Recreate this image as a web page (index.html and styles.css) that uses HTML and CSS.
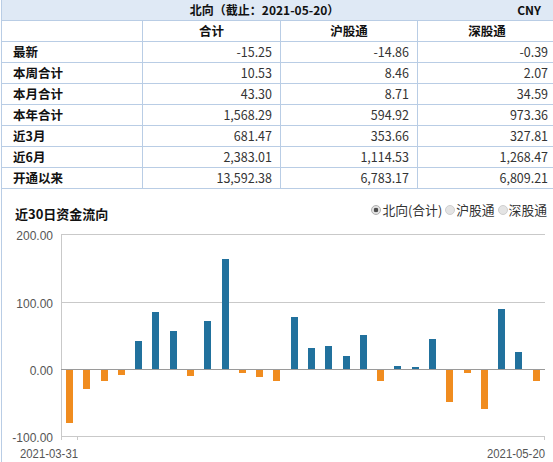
FILE: index.html
```html
<!DOCTYPE html>
<html lang="zh-CN">
<head>
  <meta charset="UTF-8">
  <meta name="viewport" content="width=device-width, initial-scale=1.0">
  <title>北向资金</title>
  <link rel="stylesheet" href="styles.css">
</head>
<body>
  <div class="panel">
    <table class="flow-table">
      <colgroup>
        <col class="c1"><col class="c2"><col class="c3"><col class="c4">
      </colgroup>
      <tr class="head">
        <td colspan="4">
          <div class="head-line">
            <span class="head-title">北向（截止：2021-05-20）</span>
            <span class="head-unit">CNY</span>
          </div>
        </td>
      </tr>
      <tr class="cols">
        <th></th><th>合计</th><th>沪股通</th><th>深股通</th>
      </tr>
      <tr><th>最新</th><td>-15.25</td><td>-14.86</td><td>-0.39</td></tr>
      <tr><th>本周合计</th><td>10.53</td><td>8.46</td><td>2.07</td></tr>
      <tr><th>本月合计</th><td>43.30</td><td>8.71</td><td>34.59</td></tr>
      <tr><th>本年合计</th><td>1,568.29</td><td>594.92</td><td>973.36</td></tr>
      <tr><th>近3月</th><td>681.47</td><td>353.66</td><td>327.81</td></tr>
      <tr><th>近6月</th><td>2,383.01</td><td>1,114.53</td><td>1,268.47</td></tr>
      <tr><th>开通以来</th><td>13,592.38</td><td>6,783.17</td><td>6,809.21</td></tr>
    </table>

    <div class="chart">
      <div class="chart-head">
        <span class="chart-title">近30日资金流向</span>
        <div class="radios">
          <label class="opt"><span class="radio on"></span>北向(合计)</label>
          <label class="opt"><span class="radio"></span>沪股通</label>
          <label class="opt"><span class="radio"></span>深股通</label>
        </div>
      </div>

      <svg class="plot" width="553" height="238" viewBox="2 0 553 238">
        <g class="grid">
          <line x1="61" y1="9.5" x2="545" y2="9.5"/>
          <line x1="61" y1="77.5" x2="545" y2="77.5"/>
          <line x1="61" y1="211.5" x2="545" y2="211.5"/>
          <line x1="61.5" y1="9" x2="61.5" y2="215"/>
          <line x1="77.5" y1="211" x2="77.5" y2="215"/>
          <line x1="544.5" y1="211" x2="544.5" y2="215"/>
        </g>
        <g class="bars">
          <rect class="down" x="66" y="145" width="7" height="53"/>
          <rect class="down" x="83" y="145" width="7" height="19"/>
          <rect class="down" x="101" y="145" width="7" height="11"/>
          <rect class="down" x="118" y="145" width="7" height="5"/>
          <rect class="up" x="135" y="116" width="7" height="28"/>
          <rect class="up" x="152" y="87" width="7" height="57"/>
          <rect class="up" x="170" y="106" width="7" height="38"/>
          <rect class="down" x="187" y="145" width="7" height="6"/>
          <rect class="up" x="204" y="96" width="7" height="48"/>
          <rect class="up" x="222" y="34" width="7" height="110"/>
          <rect class="down" x="239" y="145" width="7" height="3"/>
          <rect class="down" x="256" y="145" width="7" height="7"/>
          <rect class="down" x="273" y="145" width="7" height="11"/>
          <rect class="up" x="291" y="92" width="7" height="52"/>
          <rect class="up" x="308" y="123" width="7" height="21"/>
          <rect class="up" x="325" y="121" width="7" height="23"/>
          <rect class="up" x="343" y="131" width="7" height="13"/>
          <rect class="up" x="360" y="110" width="7" height="34"/>
          <rect class="down" x="377" y="145" width="7" height="11"/>
          <rect class="up" x="394" y="141" width="7" height="3"/>
          <rect class="up" x="412" y="142" width="7" height="2"/>
          <rect class="up" x="429" y="114" width="7" height="30"/>
          <rect class="down" x="446" y="145" width="7" height="32"/>
          <rect class="down" x="464" y="145" width="7" height="3"/>
          <rect class="down" x="481" y="145" width="7" height="39"/>
          <rect class="up" x="498" y="84" width="7" height="60"/>
          <rect class="up" x="515" y="127" width="7" height="17"/>
          <rect class="down" x="533" y="145" width="7" height="11"/>
        </g>
        <line class="zero" x1="61" y1="144.5" x2="545" y2="144.5"/>
        <g class="y-labels">
          <text x="53" y="15">200.00</text>
          <text x="53" y="83">100.00</text>
          <text x="53" y="150">0.00</text>
          <text x="53" y="217">-100.00</text>
        </g>
        <g class="x-labels">
          <text x="78" y="232.5" textLength="58" lengthAdjust="spacingAndGlyphs">2021-03-31</text>
          <text x="545" y="232.5" textLength="58" lengthAdjust="spacingAndGlyphs">2021-05-20</text>
        </g>
      </svg>
    </div>
  </div>
</body>
</html>
```

FILE: styles.css
```css
* {
  margin: 0;
  padding: 0;
  box-sizing: border-box;
}
body {
  font-family: "Noto Sans CJK SC", sans-serif;
  color: #333;
  background: #fff;
  overflow: hidden;
}
.panel {
  width: 557px;
  height: 462px;
  margin-left: 1px;
  border-left: 1px solid #b9cde5;
}

/* table */
.flow-table {
  width: 555px;
  table-layout: fixed;
  border-collapse: separate;
  border-spacing: 0;
  font-size: 12.5px;
  line-height: 20px;
}
.flow-table .c1 { width: 141px; }
.flow-table .c2 { width: 138px; }
.flow-table .c3 { width: 137px; }
.flow-table .c4 { width: 139px; }
.flow-table th,
.flow-table td {
  border-bottom: 1px solid #b9cde5;
  border-right: 1px solid #b9cde5;
  white-space: nowrap;
  overflow: hidden;
}
.flow-table th {
  text-align: left;
  padding-left: 11px;
  font-weight: bold;
  color: #111;
}
.flow-table td {
  text-align: right;
  padding-right: 8px;
  color: #333;
}
.flow-table .cols th {
  text-align: center;
  padding-left: 0;
}
.flow-table .head td {
  background: #dfe9f5;
  padding: 0;
  font-weight: bold;
  color: #111;
}
.head-line {
  display: flex;
}
.head-title {
  flex: 1;
  text-align: center;
  padding-left: 10px;
  font-size: 12px;
}
.head-unit {
  padding-right: 15px;
  font-size: 12px;
}

/* chart */
.chart-head {
  display: flex;
  justify-content: space-between;
  align-items: flex-start;
  height: 36px;
  padding: 12px 11px 0 13px;
}
.chart-title {
  padding-top: 4px;
  font-size: 13px;
  line-height: 18px;
  font-weight: bold;
  color: #111;
}
.radios {
  display: flex;
  align-items: center;
  gap: 3px;
  font-size: 12.8px;
  line-height: 18px;
  color: #333;
}
.opt {
  display: flex;
  align-items: center;
}
.radio {
  width: 10px;
  height: 10px;
  margin-right: 1px;
  border-radius: 50%;
  border: 1px solid #cfcfcf;
  background: #e4e4e4;
}
.radio.on {
  background: radial-gradient(circle, #4d4d4d 0 2px, #e2e2e2 2.6px);
  border-color: #b0b0b0;
}
.plot {
  display: block;
}
.grid line {
  stroke: #c9c9c9;
  stroke-width: 1;
}
.zero {
  stroke: #9a9a9a;
  stroke-width: 1;
}
.bars .up {
  fill: #21719d;
}
.bars .down {
  fill: #f08c1f;
}
.y-labels text {
  font-family: "Liberation Sans", sans-serif;
  font-size: 12px;
  fill: #555;
  text-anchor: end;
}
.x-labels text {
  font-family: "Liberation Sans", sans-serif;
  font-size: 12px;
  fill: #555;
  text-anchor: end;
}
```
